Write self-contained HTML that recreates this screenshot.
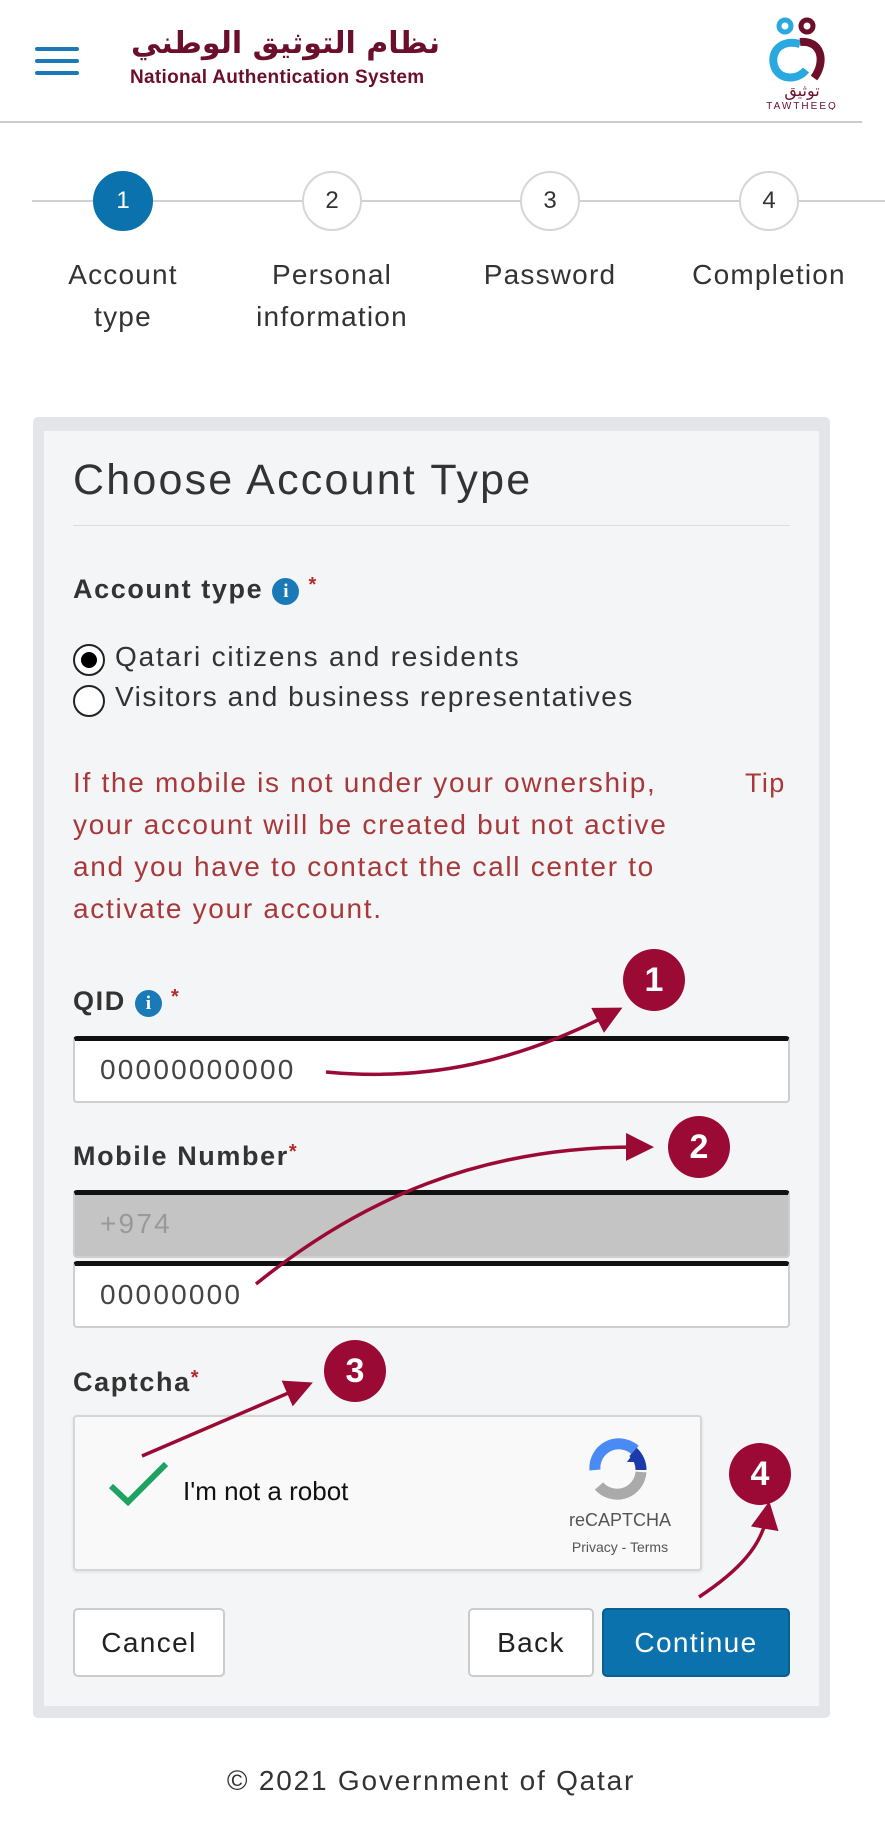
<!DOCTYPE html>
<html><head><meta charset="utf-8"><style>
*{margin:0;padding:0;box-sizing:border-box}
body{width:885px;height:1825px;background:#fff;font-family:"Liberation Sans","Noto Sans CJK SC",sans-serif;color:#333;position:relative;overflow:hidden}
.a{position:absolute}
.circ{position:absolute;width:60px;height:60px;border-radius:50%;border:2px solid #d6d6d6;background:#fff;text-align:center;line-height:56px;font-size:24px;color:#333}
.lbl{position:absolute;width:220px;text-align:center;font-size:28px;letter-spacing:1.2px;line-height:42px;color:#333}
.badge{position:absolute;width:62px;height:62px;border-radius:50%;background:#9b0a35;color:#fff;font-weight:bold;font-size:34px;text-align:center;line-height:62px}
.inp{position:absolute;left:73px;width:717px;height:67px;border:2px solid #cfcfcf;border-top:5px solid #111;border-radius:4px;background:#fff;font-size:28px;letter-spacing:2.2px;color:#444;padding-left:25px;line-height:58px}
.btn{position:absolute;top:1608px;height:69px;border:2px solid #ccc;border-radius:5px;background:#fff;font-size:28px;letter-spacing:1.4px;text-align:center;line-height:65px;color:#222}
.bl{position:absolute;font-weight:bold;font-size:27px;letter-spacing:1.6px;color:#333}
.star{color:#b52a2a;font-size:20px;vertical-align:top}
.info{display:inline-block;width:27px;height:27px;border-radius:50%;background:#1a7ab8;color:#fff;font-size:19px;text-align:center;line-height:27px;font-family:'Liberation Serif',serif;vertical-align:1px;letter-spacing:0}
</style></head><body>
<div class="a" style="left:35px;top:47px;width:44px;height:4px;background:#1a7ab8;border-radius:2px"></div>
<div class="a" style="left:35px;top:59px;width:44px;height:4px;background:#1a7ab8;border-radius:2px"></div>
<div class="a" style="left:35px;top:71px;width:44px;height:4px;background:#1a7ab8;border-radius:2px"></div>
<div class="a" style="left:130px;top:26px;width:310px;text-align:right;font-size:30px;font-weight:bold;color:#6b0f2a;font-family:'DejaVu Sans',sans-serif;line-height:36px" dir="rtl">نظام التوثيق الوطني</div>
<div class="a" style="left:130px;top:67px;font-size:19px;font-weight:bold;color:#6b0f2a;letter-spacing:0.3px">National Authentication System</div>
<svg class="a" style="left:760px;top:12px" width="84" height="98" viewBox="0 0 84 98">
<circle cx="25" cy="14" r="6" fill="none" stroke="#2aa8e0" stroke-width="5"/>
<circle cx="47" cy="14" r="6" fill="none" stroke="#6b0f2a" stroke-width="5"/>
<path d="M40 32 C18 26 8 44 16 58 C22 68 38 68 46 58" fill="none" stroke="#2aa8e0" stroke-width="8"/>
<path d="M40 30 C62 28 66 50 54 66" fill="none" stroke="#6b0f2a" stroke-width="8"/>
<text x="42" y="84" text-anchor="middle" font-size="16" fill="#6b0f2a" font-family="DejaVu Sans">توثيق</text>
<text x="42" y="97" text-anchor="middle" font-size="10" fill="#6b0f2a" letter-spacing="2">TAWTHEEQ</text>
</svg>
<div class="a" style="left:0;top:121px;width:862px;height:2px;background:#ccc"></div>
<div class="a" style="left:32px;top:200px;width:853px;height:2px;background:#d0d0d0"></div>
<div class="circ" style="left:93px;top:171px;background:#0b72ad;border-color:#0b72ad;color:#fff">1</div>
<div class="circ" style="left:302px;top:171px">2</div>
<div class="circ" style="left:520px;top:171px">3</div>
<div class="circ" style="left:739px;top:171px">4</div>
<div class="lbl" style="left:13px;top:254px">Account<br>type</div>
<div class="lbl" style="left:222px;top:254px">Personal<br>information</div>
<div class="lbl" style="left:440px;top:254px">Password</div>
<div class="lbl" style="left:659px;top:254px">Completion</div>
<div class="a" style="left:33px;top:417px;width:797px;height:1301px;background:#e4e5e8;border-radius:5px"></div>
<div class="a" style="left:44px;top:431px;width:775px;height:1275px;background:#f4f5f7"></div>
<div class="a" style="left:73px;top:456px;font-size:43px;letter-spacing:2.2px;color:#333">Choose Account Type</div>
<div class="a" style="left:73px;top:525px;width:717px;height:1px;background:#ddd"></div>
<div class="bl" style="left:73px;top:574px">Account type <span class="info">i</span> <span class="star">*</span></div>
<div class="a" style="left:73px;top:644px;width:32px;height:32px;border-radius:50%;border:2px solid #222;background:#fff"><div style="margin:6px;width:16px;height:16px;border-radius:50%;background:#000"></div></div>
<div class="a" style="left:115px;top:641px;font-size:28px;letter-spacing:1.8px;color:#333">Qatari citizens and residents</div>
<div class="a" style="left:73px;top:685px;width:32px;height:32px;border-radius:50%;border:2px solid #222;background:#fff"></div>
<div class="a" style="left:115px;top:681px;font-size:28px;letter-spacing:1.5px;color:#333">Visitors and business representatives</div>
<div class="a" style="left:73px;top:762px;width:680px;font-size:28px;letter-spacing:1.7px;line-height:42px;color:#a8383a;white-space:nowrap">If the mobile is not under your ownership,<br>your account will be created but not active<br>and you have to contact the call center to<br>activate your account.</div>
<div class="a" style="left:745px;top:762px;font-size:27px;letter-spacing:1.4px;line-height:42px;color:#a8383a">Tip</div>
<div class="bl" style="left:73px;top:986px">QID <span class="info">i</span> <span class="star">*</span></div>
<div class="inp" style="top:1036px">00000000000</div>
<div class="bl" style="left:73px;top:1141px">Mobile Number<span class="star">*</span></div>
<div class="inp" style="top:1190px;background:#c4c4c4;color:#999;height:68px">+974</div>
<div class="inp" style="top:1261px">00000000</div>
<div class="bl" style="left:73px;top:1367px">Captcha<span class="star">*</span></div>
<div class="a" style="left:73px;top:1415px;width:629px;height:156px;border:2px solid #d6d6d6;border-radius:4px;background:#f9f9f9;box-shadow:0 1px 3px rgba(0,0,0,.1)"></div>
<svg class="a" style="left:108px;top:1460px" width="62" height="46" viewBox="0 0 62 46"><path d="M3 26 L20 42 L58 4" fill="none" stroke="#1ea362" stroke-width="6"/></svg>
<div class="a" style="left:183px;top:1476px;font-size:26px;color:#111">I'm not a robot</div>
<svg class="a" style="left:585px;top:1436px" width="66" height="66" viewBox="0 0 66 66"><path d="M10 34 A24 24 0 0 1 50 14" fill="none" stroke="#4a8af4" stroke-width="11"/><path d="M52 12 L56 26 L42 26 Z" fill="#1c3aa9"/><path d="M48 16 A24 24 0 0 1 56 34" fill="none" stroke="#1c3aa9" stroke-width="11"/><path d="M56 36 A24 24 0 0 1 14 50" fill="none" stroke="#aaa" stroke-width="11"/></svg>
<div class="a" style="left:555px;top:1510px;width:130px;text-align:center;font-size:18px;color:#555">reCAPTCHA</div>
<div class="a" style="left:555px;top:1539px;width:130px;text-align:center;font-size:14px;color:#555">Privacy - Terms</div>
<div class="btn" style="left:73px;width:152px">Cancel</div>
<div class="btn" style="left:468px;width:126px">Back</div>
<div class="btn" style="left:602px;width:188px;background:#0b72ad;border-color:#095f90;color:#fff">Continue</div>
<svg class="a" style="left:0;top:0" width="885" height="1825">
<defs><marker id="m" markerWidth="8" markerHeight="8" refX="4" refY="4" orient="auto" markerUnits="strokeWidth"><path d="M0 0 L8 4 L0 8 Z" fill="#9b0a35"/></marker></defs>
<g fill="none" stroke="#9b0a35" stroke-width="3.5">
<path d="M326 1072 C430 1082 520 1060 610 1014" marker-end="url(#m)"/>
<path d="M256 1284 C360 1200 480 1146 640 1147" marker-end="url(#m)"/>
<path d="M142 1456 L300 1388" marker-end="url(#m)"/>
<path d="M699 1597 C740 1570 762 1545 767 1515" marker-end="url(#m)"/>
</g></svg>
<div class="badge" style="left:623px;top:949px">1</div>
<div class="badge" style="left:668px;top:1116px">2</div>
<div class="badge" style="left:324px;top:1340px">3</div>
<div class="badge" style="left:729px;top:1443px">4</div>
<div class="a" style="left:0;top:1765px;width:862px;text-align:center;font-size:28px;letter-spacing:1.8px;color:#333">© 2021 Government of Qatar</div>
</body></html>
